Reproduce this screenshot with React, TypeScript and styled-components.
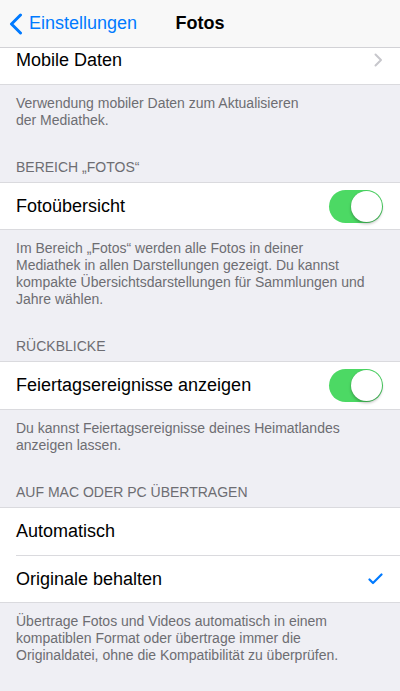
import React from "react";
import styled, { createGlobalStyle } from "styled-components";

const GlobalStyle = createGlobalStyle`
  html, body {
    margin: 0;
    padding: 0;
    background: #efeff4;
    overflow: hidden;
  }
  body {
    font-family: "Liberation Sans", Arial, sans-serif;
    -webkit-font-smoothing: antialiased;
  }
`;

const Screen = styled.div`
  width: 400px;
  height: 691px;
  background: #efeff4;
  overflow: hidden;
`;

const NavBar = styled.header`
  position: sticky;
  top: 0;
  z-index: 2;
  height: 47px;
  display: grid;
  grid-template-columns: 1fr auto 1fr;
  align-items: center;
  background: #f8f8f8;
  border-bottom: 1px solid #d2d2d6;
`;

const BackButton = styled.div`
  display: flex;
  align-items: center;
  gap: 6px;
  padding-left: 9px;
  color: #007aff;
  font-size: 18px;
`;

const NavTitle = styled.div`
  font-size: 18px;
  font-weight: 700;
  color: #000;
`;

const Group = styled.div<{ $pulled?: boolean }>`
  background: #fff;
  border-top: 1px solid #dadade;
  border-bottom: 1px solid #dadade;
  margin-top: ${(p) => (p.$pulled ? "-12px" : "0")};
`;

const Row = styled.div<{ $divider?: boolean }>`
  height: 46.7px;
  display: flex;
  align-items: center;
  justify-content: space-between;
  margin-left: 16px;
  padding-right: 17px;
  font-size: 18px;
  color: #000;
  border-top: ${(p) => (p.$divider ? "1px solid #dadade" : "none")};
`;

const Footer = styled.p`
  margin: 0;
  padding: 10px 16px 0;
  font-size: 14px;
  line-height: 17px;
  color: #6d6d72;
`;

const Header = styled.h3`
  margin: 0;
  padding: 30px 16px 6px;
  font-size: 14px;
  font-weight: 400;
  line-height: 17px;
  color: #6d6d72;
  text-transform: uppercase;
`;

const Toggle = styled.div`
  width: 54px;
  height: 33px;
  box-sizing: border-box;
  padding: 1px;
  border-radius: 17px;
  background: #4cd964;
  display: flex;
  justify-content: flex-end;
  align-items: center;
`;

const Knob = styled.div`
  width: 31px;
  height: 31px;
  border-radius: 50%;
  background: #fff;
  box-shadow: 0 2px 3px rgba(0, 0, 0, 0.25), 0 0 0 0.5px rgba(0, 0, 0, 0.08);
`;

const BackChevron = () => (
  <svg width="14" height="22" viewBox="0 0 14 22">
    <polyline
      points="11.5,2 2.5,11 11.5,20"
      fill="none"
      stroke="#007aff"
      strokeWidth="3"
      strokeLinecap="round"
      strokeLinejoin="round"
    />
  </svg>
);

const Disclosure = () => (
  <svg width="9" height="14" viewBox="0 0 9 14">
    <polyline
      points="1.5,1.5 7,7 1.5,12.5"
      fill="none"
      stroke="#c7c7cc"
      strokeWidth="2"
      strokeLinecap="round"
      strokeLinejoin="round"
    />
  </svg>
);

const Check = () => (
  <svg width="15" height="12" viewBox="0 0 15 12">
    <polyline
      points="1.5,6.5 5,10 13.5,1.5"
      fill="none"
      stroke="#007aff"
      strokeWidth="2.2"
      strokeLinecap="round"
      strokeLinejoin="round"
    />
  </svg>
);

const Switch = () => (
  <Toggle>
    <Knob />
  </Toggle>
);

export default function App() {
  return (
    <Screen>
      <GlobalStyle />
      <NavBar>
        <BackButton>
          <BackChevron />
          Einstellungen
        </BackButton>
        <NavTitle>Fotos</NavTitle>
        <div />
      </NavBar>

      <Group $pulled>
        <Row>
          Mobile Daten
          <Disclosure />
        </Row>
      </Group>
      <Footer>
        Verwendung mobiler Daten zum Aktualisieren
        <br />
        der Mediathek.
      </Footer>

      <Header>Bereich „Fotos“</Header>
      <Group>
        <Row>
          Fotoübersicht
          <Switch />
        </Row>
      </Group>
      <Footer>
        Im Bereich „Fotos“ werden alle Fotos in deiner
        <br />
        Mediathek in allen Darstellungen gezeigt. Du kannst
        <br />
        kompakte Übersichtsdarstellungen für Sammlungen und
        <br />
        Jahre wählen.
      </Footer>

      <Header>Rückblicke</Header>
      <Group>
        <Row>
          Feiertagsereignisse anzeigen
          <Switch />
        </Row>
      </Group>
      <Footer>
        Du kannst Feiertagsereignisse deines Heimatlandes
        <br />
        anzeigen lassen.
      </Footer>

      <Header>Auf Mac oder PC übertragen</Header>
      <Group>
        <Row>Automatisch</Row>
        <Row $divider>
          Originale behalten
          <Check />
        </Row>
      </Group>
      <Footer>
        Übertrage Fotos und Videos automatisch in einem
        <br />
        kompatiblen Format oder übertrage immer die
        <br />
        Originaldatei, ohne die Kompatibilität zu überprüfen.
      </Footer>
    </Screen>
  );
}
